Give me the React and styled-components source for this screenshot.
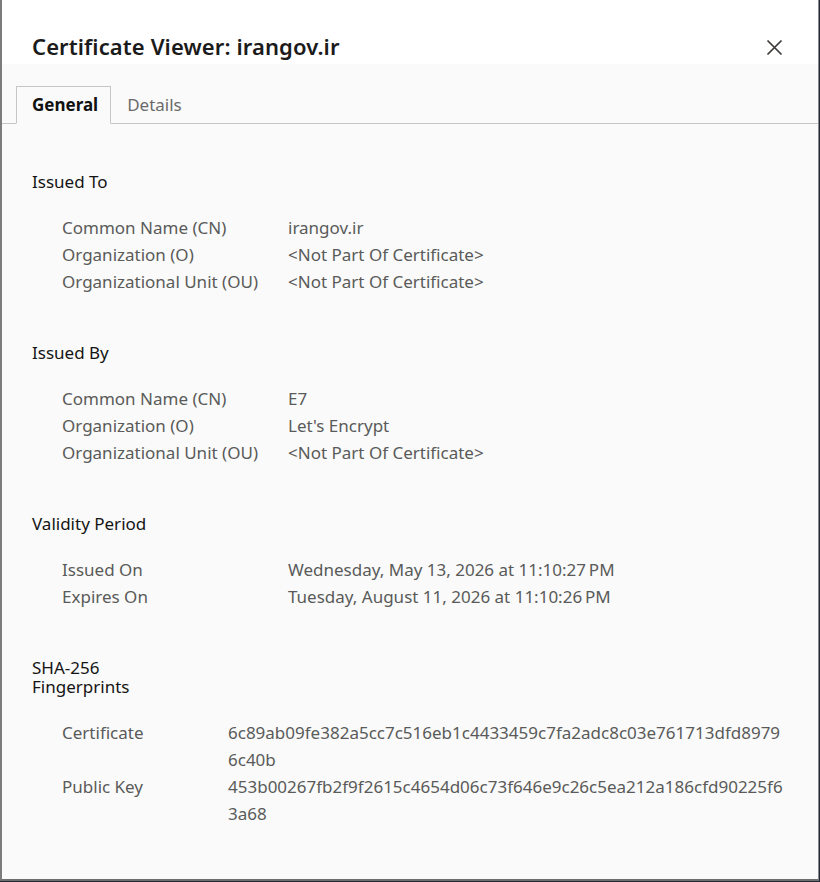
import React from 'react'
import styled, { createGlobalStyle } from 'styled-components'

const GlobalStyle = createGlobalStyle`
  html, body {
    margin: 0;
    padding: 0;
    background: #232634;
  }
  body {
    font-family: "Noto Sans", "Open Sans", sans-serif;
    -webkit-font-smoothing: antialiased;
  }
`

const Dialog = styled.div`
  box-sizing: border-box;
  width: 819px;
  height: 881px;
  display: flex;
  flex-direction: column;
  background: #f9faf9;
  border-left: 2px solid #7c7c7c;
  border-right: 1px solid #8a8a8a;
  border-bottom: 2px solid #6e6e6e;
  overflow: hidden;
`

const Header = styled.header`
  height: 64px;
  flex: none;
  display: flex;
  align-items: flex-start;
  justify-content: space-between;
  padding: 31px 34px 0 30px;
  box-sizing: border-box;
  background: #ffffff;
`

const Title = styled.h1`
  margin: 0;
  font-size: 22px;
  line-height: 30px;
  font-weight: 600;
  color: #1b1b1b;
  letter-spacing: 0.1px;
`

const CloseButton = styled.button`
  width: 20px;
  height: 20px;
  margin-top: 6px;
  padding: 0;
  border: 0;
  background: none;
  display: flex;
  align-items: center;
  justify-content: center;
  cursor: pointer;
`

const TabBar = styled.nav`
  height: 60px;
  flex: none;
  display: flex;
  align-items: flex-end;
  padding-left: 14px;
  box-sizing: border-box;
  border-bottom: 1px solid #c6c6c6;
`

const Tab = styled.button`
  height: 38px;
  box-sizing: border-box;
  margin-bottom: -1px;
  padding: 0 12px 2px 15px;
  font-family: inherit;
  font-size: 17px;
  font-weight: ${(p) => (p.$active ? 700 : 400)};
  color: ${(p) => (p.$active ? '#111' : '#6b6b6b')};
  background: ${(p) => (p.$active ? '#f9faf9' : 'transparent')};
  border: 1px solid ${(p) => (p.$active ? '#c6c6c6' : 'transparent')};
  border-bottom-color: ${(p) => (p.$active ? '#f9faf9' : 'transparent')};
  cursor: pointer;
`

const Body = styled.main`
  flex: 1;
  padding: 48px 34px 0 30px;
  display: flex;
  flex-direction: column;
  gap: 48px;
`

const Section = styled.section`
  display: flex;
  flex-direction: column;
  gap: 23px;
`

const SectionTitle = styled.h2`
  margin: 0;
  max-width: 140px;
  font-size: 17px;
  line-height: 19px;
  font-weight: 400;
  color: #141414;
`

const Fields = styled.dl`
  margin: 0 0 0 30px;
  display: grid;
  grid-template-columns: ${(p) => p.$labelWidth}px 1fr;
  font-size: 17px;
  line-height: 27px;
  color: #5a5a5a;
`

const Label = styled.dt`
  margin: 0;
`

const Value = styled.dd`
  margin: 0;
  word-break: ${(p) => (p.$hash ? 'break-all' : 'normal')};
`

const sections = [
  {
    title: 'Issued To',
    labelWidth: 226,
    rows: [
      ['Common Name (CN)', 'irangov.ir'],
      ['Organization (O)', '<Not Part Of Certificate>'],
      ['Organizational Unit (OU)', '<Not Part Of Certificate>'],
    ],
  },
  {
    title: 'Issued By',
    labelWidth: 226,
    rows: [
      ['Common Name (CN)', 'E7'],
      ['Organization (O)', "Let's Encrypt"],
      ['Organizational Unit (OU)', '<Not Part Of Certificate>'],
    ],
  },
  {
    title: 'Validity Period',
    labelWidth: 226,
    rows: [
      ['Issued On', 'Wednesday, May 13, 2026 at 11:10:27\u202FPM'],
      ['Expires On', 'Tuesday, August 11, 2026 at 11:10:26\u202FPM'],
    ],
  },
  {
    title: 'SHA-256 Fingerprints',
    labelWidth: 166,
    hash: true,
    rows: [
      ['Certificate', '6c89ab09fe382a5cc7c516eb1c4433459c7fa2adc8c03e761713dfd89796c40b'],
      ['Public Key', '453b00267fb2f9f2615c4654d06c73f646e9c26c5ea212a186cfd90225f63a68'],
    ],
  },
]

const CloseIcon = () => (
  <svg width="17" height="17" viewBox="0 0 17 17">
    <path d="M1.5 1.5 L15.5 15.5 M15.5 1.5 L1.5 15.5" stroke="#3d3a38" strokeWidth="1.7" fill="none" />
  </svg>
)

export default function App() {
  return (
    <>
      <GlobalStyle />
      <Dialog>
        <Header>
          <Title>Certificate Viewer: irangov.ir</Title>
          <CloseButton aria-label="Close">
            <CloseIcon />
          </CloseButton>
        </Header>
        <TabBar>
          <Tab $active>General</Tab>
          <Tab>Details</Tab>
        </TabBar>
        <Body>
          {sections.map((s) => (
            <Section key={s.title}>
              <SectionTitle>{s.title}</SectionTitle>
              <Fields $labelWidth={s.labelWidth}>
                {s.rows.map(([label, value]) => (
                  <React.Fragment key={label}>
                    <Label>{label}</Label>
                    <Value $hash={s.hash}>{value}</Value>
                  </React.Fragment>
                ))}
              </Fields>
            </Section>
          ))}
        </Body>
      </Dialog>
    </>
  )
}
